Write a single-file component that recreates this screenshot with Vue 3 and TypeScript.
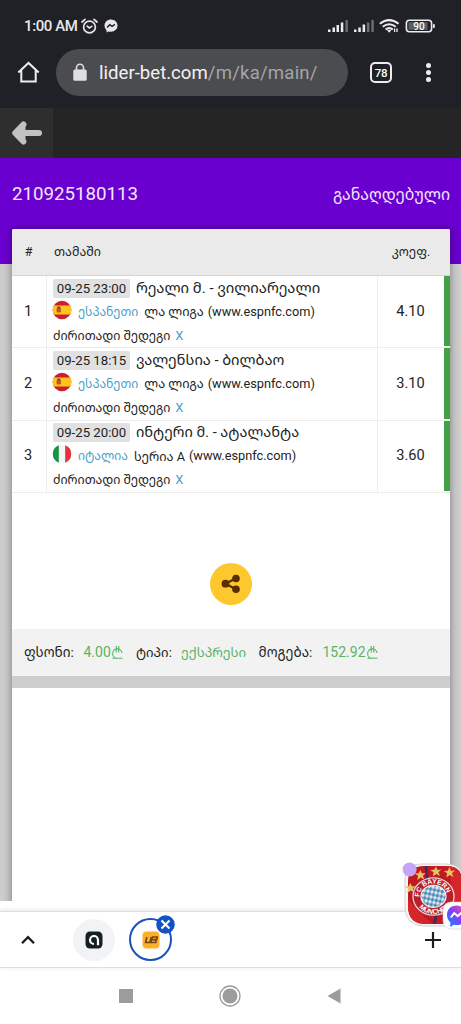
<script setup lang="ts">
interface Match {
  id: number
  date: string
  teams: string
  teamsKey: string
  flag: 'es' | 'it'
  country: string
  league: string
  odds: string
}

const matches: Match[] = [
  { id: 1, date: '09-25 23:00', teams: 'რეალი მ. - ვილიარეალი', teamsKey: 't1', flag: 'es', country: 'ესპანეთი', league: 'ლა ლიგა', odds: '4.10' },
  { id: 2, date: '09-25 18:15', teams: 'ვალენსია - ბილბაო', teamsKey: 't2', flag: 'es', country: 'ესპანეთი', league: 'ლა ლიგა', odds: '3.10' },
  { id: 3, date: '09-25 20:00', teams: 'ინტერი მ. - ატალანტა', teamsKey: 't3', flag: 'it', country: 'იტალია', league: 'სერია A', odds: '3.60' },
]
</script>

<template>
  <div class="screen">
    <div class="status">
      <span class="clock">1:00 AM</span>
      <svg class="alarm" width="17" height="17" viewBox="0 0 17 17" fill="none" stroke="#e4e4e6" stroke-width="1.7" stroke-linecap="round">
        <circle cx="8.5" cy="9" r="5.9" /><path d="M1 4 4 1.3M16 4 13 1.3M6.2 8.1 8.3 10l2.5-1.6" />
      </svg>
      <svg class="msgr" width="14" height="14" viewBox="0 0 14 14">
        <path fill="#e8e8ea" d="M7 .4C3.2.4.5 3.1.5 6.6c0 1.9.8 3.5 2.1 4.6v2.2l2-1c.8.2 1.5.3 2.4.3 3.8 0 6.5-2.700 6.5-6.100S10.800.4 7 .4z" />
        <path d="m3.100 8.400 2.600-2.700 2.400 1.700 2.800-2" fill="none" stroke="#202127" stroke-width="1.5" />
      </svg>
      <span class="grow"></span>
      <svg width="110" height="18" viewBox="0 0 110 18" class="signals">
        <g fill="#ececee">
          <rect x="0" y="12.5" width="2.5" height="2.5" /><rect x="4.5" y="10.5" width="2.5" height="4.5" /><rect x="8.5" y="8" width="2.5" height="7" /><rect x="12.8" y="5.5" width="2.5" height="9.5" />
          <rect x="26" y="12.5" width="2.5" height="2.5" /><rect x="30.3" y="10.5" width="2.5" height="4.5" /><rect x="34.6" y="7.5" width="2.5" height="7.5" />
        </g>
        <g fill="#707176"><rect x="17.5" y="3" width="2.3" height="12" /><rect x="38.9" y="5.5" width="2.5" height="9.5" /><rect x="43.4" y="3" width="2.3" height="12" /></g>
        <g fill="none" stroke="#ececee" stroke-width="2">
          <path d="M51.800 6.800q9.400-7.400 18.800 0M54.700 9.800q6.500-5 13 0M57.500 12.500q3.700-2.800 7.400 0" />
        </g>
        <path d="M59 12.900h4.400L61.200 15.800z" fill="#ececee" />
        <path d="M66.600 11.500v3.500M69 15v-3.500" stroke="#ececee" stroke-width="1.3" />
        <rect x="78.4" y="3.2" width="25.2" height="11.6" rx="3" fill="none" stroke="#ececee" stroke-width="1.6" />
        <rect x="80.5" y="5.2" width="19" height="7.6" fill="#5d5e62" /><rect x="105" y="7" width="1.8" height="4" rx=".8" fill="#ececee" />
        <text x="91" y="12.6" text-anchor="middle" fill="#fff" font-size="10" font-weight="500" font-family="Roboto">90</text>
      </svg>
    </div>

    <div class="browser">
      <svg class="home" width="23" height="23" viewBox="0 0 23 23" fill="none" stroke="#ededef" stroke-width="2"><path d="M1.300 11.400 11.500 1.900 21.700 11.400M4.300 9.600v11h14.400v-11" /></svg>
      <div class="url">
        <svg width="14" height="19" viewBox="0 0 14 19"><path d="M3.500 8V4.800a3.500 3.500 0 0 1 7 0V8" fill="none" stroke="#e1e1e3" stroke-width="1.6" /><rect x=".3" y="6.5" width="13.4" height="11.3" rx="1.5" fill="#e1e1e3" /></svg>
        <span class="host">lider-bet.com<span class="path">/m/ka/main/</span></span>
      </div>
      <div class="tabs">78</div>
      <div class="dots"><i></i><i></i><i></i></div>
    </div>

    <div class="sitebar">
      <div class="back"><svg width="30" height="24" viewBox="0 0 30 24"><path d="M11.400 3.500 3.200 12l8.200 8.500M5 12h22" fill="none" stroke="#c2c2c2" stroke-width="6" stroke-linecap="round" stroke-linejoin="round" /><path d="M4 12 13.500 2.500v19z" fill="#c2c2c2" /></svg></div>
    </div>

    <main class="page">
      <header class="ticket"><span>210925180113</span><span class="paid">განაღდებული</span></header>
      <section class="card">
        <div class="thead"><span class="num">#</span><span class="game">თამაში</span><span class="coef">კოეფ.</span></div>
        <div v-for="m in matches" :key="m.id" class="row">
          <div class="num">{{ m.id }}</div>
          <div class="game">
            <div class="l1"><span class="date">{{ m.date }}</span><span class="teams" :class="m.teamsKey">{{ m.teams }}</span></div>
            <div class="l2">
              <svg width="20" height="20" viewBox="0 0 20 20" class="flag">
                <template v-if="m.flag === 'es'">
                  <circle cx="10" cy="10" r="9.3" fill="#c9202b" />
                  <path d="M1.800 5.600h16.400a9.300 9.300 0 0 1 0 8.800H1.800a9.300 9.300 0 0 1 0-8.800z" fill="#ffc51c" />
                  <rect x="4.5" y="7.5" width="4.5" height="5" rx="1.5" fill="#b65a28" /><path d="M5.300 6.500h3v1.500h-3z" fill="#9c3422" />
                </template>
                <template v-else>
                  <circle cx="10" cy="10" r="9.3" fill="#f5f5f5" />
                  <path d="M6.800 1.300a9.300 9.300 0 0 0 0 17.400z" fill="#159447" /><path d="M13.200 1.300a9.300 9.300 0 0 1 0 17.400z" fill="#e2323b" />
                </template>
              </svg>
              <span class="country">{{ m.country }}</span><span class="league">{{ m.league }}</span><span class="site">(www.espnfc.com)</span>
            </div>
            <div class="l3"><span class="market">ძირითადი შედეგი</span><span class="pick">X</span></div>
          </div>
          <div class="coef">{{ m.odds }}</div>
          <div class="won"></div>
        </div>
        <div class="share"><div class="disc">
          <svg width="20" height="20" viewBox="0 0 20 20" fill="#5a2d05"><path d="M15 4.300 4.500 9.700 15 15.300" fill="none" stroke="#5a2d05" stroke-width="2.3" /><circle cx="4.5" cy="9.7" r="3.9" /><circle cx="15" cy="4.5" r="3.8" /><circle cx="15" cy="15.2" r="3.8" /></svg>
        </div></div>
        <div class="totals">
          <span class="lab a">ფსონი:</span><span class="val b">4.00<svg width="13" height="15" viewBox="0 0 13 15"><path d="M1.500 13.300h10M6.200 13.300A4.700 4.700 0 1 1 11 8M5.200 1v6.500M7.700 1v6.500" /></svg></span>
          <span class="lab c">ტიპი:</span><span class="val d">ექსპრესი</span>
          <span class="lab e">მოგება:</span><span class="val f">152.92<svg width="13" height="15" viewBox="0 0 13 15"><path d="M1.500 13.300h10M6.200 13.300A4.700 4.700 0 1 1 11 8M5.200 1v6.500M7.700 1v6.500" /></svg></span>
        </div>
        <div class="strip"></div>
      </section>
    </main>

    <div class="tabstrip">
      <svg class="chev" width="14" height="10" viewBox="0 0 14 10"><path d="m1 8.300 6-6.200 6 6.200" fill="none" stroke="#1c1c1c" stroke-width="2.3" /></svg>
      <div class="tab"><svg width="18" height="18" viewBox="0 0 18 18"><rect x=".5" y=".5" width="17" height="17" rx="4.5" fill="#172024" /><path d="M9 13A4 4 0 1 1 13 9v5.200" fill="none" stroke="#fff" stroke-width="2.2" /></svg></div>
      <div class="tab active">
        <svg width="18" height="18" viewBox="0 0 18 18"><rect x=".5" y=".5" width="17" height="17" rx="4" fill="#fbb12c" /><path d="M4.800 6 3.600 11.500H8L9.300 6M10 6h5.200l-.6 2.600H10.400M14.300 8.800l-.6 2.700H8.900L10.300 6" fill="none" stroke="#774618" stroke-width="1.7" /></svg>
        <div class="close"><svg width="19" height="19" viewBox="0 0 19 19"><circle cx="9.5" cy="9.5" r="9.3" fill="#1153c7" /><path d="m5.500 5.500 8 8m0-8-8 8" stroke="#fff" stroke-width="2.1" /></svg></div>
      </div>
      <svg class="plus" width="18" height="18" viewBox="0 0 18 18"><path d="M9 1v16M1 9h16" stroke="#1c1c1c" stroke-width="2.2" /></svg>
    </div>

    <div class="nav">
      <i class="square"></i>
      <svg width="22" height="22" viewBox="0 0 22 22"><circle cx="11" cy="11" r="10" fill="none" stroke="#9c9c9c" stroke-width="1.3" /><circle cx="11" cy="11" r="7.5" fill="#9c9c9c" /></svg>
      <svg width="14" height="16" viewBox="0 0 14 16"><path d="M13.500.5v15L.5 8z" fill="#9c9c9c" /></svg>
    </div>

    <div class="bubble">
      <svg width="60" height="72" viewBox="0 0 60 72">
        <defs>
          <clipPath id="photo"><path d="M6 21Q6 6 22 6h22q16 0 16 15v25q0 18-15 18H24Q6 64 6 46z" /></clipPath>
          <linearGradient id="chat" x1="0" y1="1" x2="1" y2="0"><stop stop-color="#008fff" /><stop offset=".5" stop-color="#843eff" /><stop offset="1" stop-color="#ff5b91" /></linearGradient>
          <pattern id="lozenge" width="4" height="5" patternUnits="userSpaceOnUse" patternTransform="rotate(12)"><rect width="4" height="5" fill="#dceaf3" /><path d="m2 0 2 2.500L2 5 0 2.500z" fill="#4a86b5" /></pattern>
          <path id="top" d="M17.800 40A14 13 0 1 1 45.300 36" /><path id="bottom" d="M14.500 43A18.500 17 0 0 0 50 40" />
        </defs>
        <path d="M3 19Q3 4 19 4h25q17 0 17 16v26q0 20-17 20H22Q3 66 3 46z" fill="#f8f5f6" stroke="#c7c5c6" stroke-width=".8" />
        <g clip-path="url(#photo)">
          <rect width="60" height="72" fill="#c01a22" />
          <path d="M5 38q13 16 27 28h-27zM45 5l16 3v54l-16 3q11-25 0-60z" fill="#d4262b" />
          <path d="m24 5 1 14M35 52l-3 13" stroke="#4a285e" stroke-width="3" />
          <ellipse cx="31.5" cy="36.5" rx="20.5" ry="18.7" fill="#b81f2b" stroke="#e7d4d7" stroke-width="1.3" />
          <ellipse cx="31.5" cy="36.3" rx="12.5" ry="11" fill="url(#lozenge)" stroke="#eee" stroke-width="1.2" />
          <g fill="#fff" font-family="Liberation Sans" font-size="6.8" font-weight="700">
            <text><textPath href="#top" startOffset="3">FC BAYERN</textPath></text><text><textPath href="#bottom" startOffset="5">MÜNCHEN</textPath></text>
          </g>
        </g>
        <g fill="#e7c163"><path id="star" d="m18.500 10 1.500 3.400 3.900-.4-3 2.700 1.500 3.800-3.600-2.100-3.500 2.500.8-4.100-3.500-2.300 4-.3z" /><use href="#star" x="15.5" y="-3.5" /><use href="#star" x="29" y="-2.5" /><use href="#star" x="-10" y="13" /></g>
        <circle cx="7.6" cy="9.5" r="7" fill="#c7a4f8" />
        <rect x="41" y="42" width="30" height="27" rx="8" fill="#fff" stroke="#d1cccf" stroke-width=".6" />
        <path d="M54.500 45.500c-5.700 0-9.500 4.100-9.500 9.500 0 3 1.300 5.600 3.300 7.300V67l3.600-2.300c1 .2 2 .3 3.100.3 5.200 0 9.500-4.100 9.500-9.700s-4.300-9.800-10-9.800z" fill="url(#chat)" /><path d="m48.800 57.500 3.400-4.400 3.500 3 4-3.600" stroke="#fff" stroke-width="2" fill="none" />
      </svg>
    </div>
  </div>
</template>

<style>
body { margin: 0; overflow: hidden; }
</style>

<style scoped>
* { box-sizing: border-box; }
.screen { position: relative; width: 461px; height: 1024px; overflow: hidden; background: #fff; color: #232323; font-family: Roboto, "Noto Sans Georgian", "Noto Sans", "DejaVu Sans", sans-serif; white-space: nowrap; }
svg { display: block; flex: none; }
.grow { flex: 1; }
.status { display: flex; align-items: center; height: 49px; padding: 3px 23px 0 24px; background: #202127; color: #e8e8ea; }
.clock { font-size: 15px; font-weight: 500; letter-spacing: -.4px; width: 54px; }
.alarm { margin-left: 3px; }
.msgr { margin-left: 6px; }
.browser { display: flex; align-items: center; height: 58px; padding: 0 30.5px 11px 17px; background: #202127; }
.url { display: flex; align-items: center; width: 292px; height: 47px; margin-left: 16px; padding-left: 17px; border-radius: 24px; background: #4b4c50; }
.host { margin-left: 12px; padding-top: 1px; color: #f2f2f3; font-size: 18.6px; }
.path { color: #a4a5a8; letter-spacing: .2px; }
.tabs { display: flex; align-items: center; justify-content: center; width: 22px; height: 21px; margin-left: 22px; border: 2px solid #ececee; border-radius: 5px; color: #fff; font-size: 11.5px; font-weight: 500; letter-spacing: -.4px; }
.dots { display: flex; flex-direction: column; gap: 2.3px; margin-left: auto; }
.dots i { width: 5px; height: 5px; border-radius: 50%; background: #ececee; }
.sitebar { height: 51px; background: #252525; border-top: 1px solid #252320; }
.back { display: flex; align-items: center; width: 53px; height: 50px; padding-left: 12px; background: #2e2e2e; }
.page { height: 743px; padding: 0 11px 0 12px; background: linear-gradient(#6a00cf 0 106px, #cdcdcd 106px); }
.ticket { display: flex; align-items: center; justify-content: space-between; height: 71px; color: #f2e6ff; font-size: 18.7px; }
.paid { font-size: 15.8px; }
.card { height: 682px; background: #fff; border-radius: 2px 2px 0 0; box-shadow: 0 1px 8px rgba(0,0,0,.42); clip-path: inset(-12px -12px 10px -12px); }
.thead { display: flex; align-items: center; height: 47px; padding-bottom: 1px; background: #eaeaea; border-bottom: 1px solid #d5d5d5; border-radius: 2px 2px 0 0; font-size: 12.5px; }
.num { display: flex; align-items: center; justify-content: center; width: 35px; padding-right: 2px; }
.thead .game { width: 331px; padding-left: 7px; }
.coef { display: flex; align-items: center; justify-content: center; width: 66px; }
.row { display: flex; height: 72.3px; border-bottom: 1px solid #ececec; font-size: 14.6px; }
.row .num { border-right: 1px solid #ececec; }
.row .num, .row .coef { padding-bottom: 2px; }
.row .game { width: 331px; padding: 2px 0 0 6px; border-right: 1px solid #ececec; }
.won { width: 6.5px; margin: 0 0 1px auto; background: #43a047; }
.l1 { display: flex; align-items: center; height: 20px; }
.date { display: flex; align-items: center; justify-content: center; width: 77px; height: 19px; border-radius: 2px; background: #e1e1e1; font-size: 13.2px; }
.teams { margin: 0 0 3px 6px; }
.t1 { font-size: 14.85px; }
.t2 { font-size: 14.7px; }
.t3 { font-size: 14.55px; }
.l2 { display: flex; align-items: center; height: 27px; padding-bottom: 1px; font-size: 12.75px; }
.flag { margin: 0 0 3px -1px; }
.country { margin-left: 6px; color: #4a9fc9; font-size: 12.2px; }
.league { margin-left: 6px; }
.site { margin-left: 4px; }
.l3 { display: flex; align-items: center; height: 20px; font-size: 12.4px; }
.pick { margin-left: 5px; color: #4a9fc9; font-size: 13px; }
.share { display: flex; align-items: center; justify-content: center; height: 136px; padding-top: 47px; }
.disc { display: flex; align-items: center; justify-content: center; width: 42px; height: 42px; border-radius: 50%; background: #fdc82e; }
.totals { display: flex; align-items: center; height: 47px; padding-left: 12px; background: #f2f2f2; font-size: 14px; }
.val { display: flex; align-items: center; color: #59b565; }
.val svg { fill: none; stroke: #59b565; stroke-width: 1.1; }
.lab { font-size: 13.5px; }
.a { width: 59.5px; } .b { width: 52.5px; } .c { width: 45px; font-size: 13.1px; } .d { width: 77.5px; font-size: 13.3px; } .e { width: 64px; }
.strip { height: 12px; background: #cecece; }
.tabstrip { display: flex; align-items: center; position: relative; height: 57px; margin-top: 10px; padding: 0 19px 0 21px; background: #fff; border-top: 1px solid #dedede; border-bottom: 1px solid #dedede; box-shadow: 0 -1px 5px #e5e5e5; }
.tab { position: relative; display: flex; align-items: center; justify-content: center; width: 42px; height: 42px; margin-left: 38px; border-radius: 50%; background: #f2f3f5; }
.tab.active { width: 43px; height: 43px; margin-left: 14px; border: 2px solid #1752be; background: #fff; }
.close { position: absolute; top: -5px; right: -5px; }
.plus { margin-left: auto; }
.nav { display: flex; align-items: center; justify-content: space-between; height: 56px; padding: 0 120px 0 119px; }
.square { width: 14px; height: 14px; background: #9c9c9c; }
.bubble { position: absolute; left: 402px; top: 860px; }
</style>
